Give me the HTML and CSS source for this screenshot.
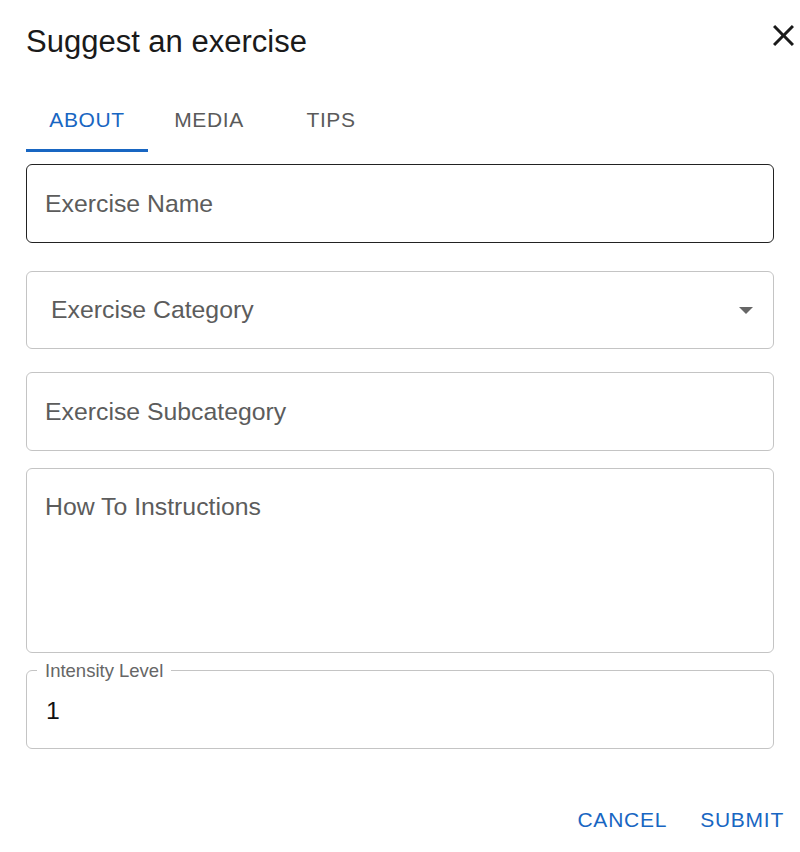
FILE: index.html
```html
<!DOCTYPE html>
<html lang="en">
<head>
<meta charset="utf-8">
<title>Suggest an exercise</title>
<link rel="stylesheet" href="styles.css">
</head>
<body>
<div class="dialog">
  <div class="header">
    <h1 class="title">Suggest an exercise</h1>
    <button class="close" aria-label="Close">
      <svg viewBox="5 5 14 14" width="21" height="21"><path d="M19 6.41 17.59 5 12 10.59 6.41 5 5 6.41 10.59 12 5 17.59 6.41 19 12 13.41 17.59 19 19 17.59 13.41 12z" fill="#1a1a1a"/></svg>
    </button>
  </div>
  <div class="tabs">
    <div class="tab active">ABOUT</div>
    <div class="tab">MEDIA</div>
    <div class="tab">TIPS</div>
  </div>
  <div class="form">
    <div class="field field-focus f-name"><span class="ph">Exercise Name</span></div>
    <div class="field field-select f-cat"><span class="ph">Exercise Category</span>
      <svg class="arrow" viewBox="0 0 14 7" width="14" height="7"><path d="M0 0 L7 7 L14 0z" fill="#666"/></svg>
    </div>
    <div class="field f-sub"><span class="ph">Exercise Subcategory</span></div>
    <div class="field field-multi f-how"><span class="ph">How To Instructions</span></div>
    <div class="field field-outlined f-int">
      <span class="legend">Intensity Level</span>
      <span class="value">1</span>
    </div>
  </div>
  <div class="actions">
    <button class="btn">CANCEL</button>
    <button class="btn">SUBMIT</button>
  </div>
</div>
</body>
</html>
```
FILE: styles.css
```css
* { box-sizing: border-box; }
html, body { margin: 0; padding: 0; background: #fff; }
body { font-family: "Liberation Sans", Arial, sans-serif; }

.dialog { width: 800px; height: 852px; padding: 24px 26px 0 26px; }

.header { display: flex; justify-content: space-between; align-items: flex-start; height: 36px; }
.title { margin: 0; font-size: 31px; font-weight: 400; line-height: 36px; color: #1a1a1a; }
.close { border: 0; background: none; padding: 0; margin: 1px -20px 0 0; width: 21px; height: 21px; display: block; }
.close svg { display: block; }

.tabs { display: flex; margin-top: 26px; height: 66px; }
.tab { width: 122px; display: flex; align-items: center; justify-content: center;
  font-size: 21px; letter-spacing: 0.6px; color: #5a5a5a; border-bottom: 3px solid transparent; padding-top: 4px; }
.tab.active { color: #1866c2; border-bottom-color: #1866c2; }

.form { display: flex; flex-direction: column; margin-top: 12px; }
.field { height: 79px; border: 1px solid #c4c4c4; border-radius: 6px; display: flex; align-items: center;
  padding-left: 18px; font-size: 24.8px; color: #5c5c5c; position: relative; }
.field-focus { border: 1.5px solid #222; }
.f-cat { height: 78px; margin-top: 28px; padding-left: 24px; padding-right: 20px; justify-content: space-between; }
.f-sub { margin-top: 23px; }
.f-how { margin-top: 17px; height: 185px; align-items: flex-start; padding-top: 24px; line-height: 28px; }
.f-int { margin-top: 17px; padding-top: 3px; }
.legend { position: absolute; top: -11px; left: 10px; padding: 0 8px 0 8px; background: #fff;
  font-size: 18.5px; line-height: 22px; color: #666; }
.value { color: #111; padding-left: 1px; }
.arrow { display: block; }

.actions { display: flex; justify-content: flex-end; gap: 33px; margin-top: 51px; margin-right: -10px; height: 40px; align-items: center; }
.btn { border: 0; background: none; padding: 0; font-family: "Liberation Sans", Arial, sans-serif;
  font-size: 21px; letter-spacing: 0.75px; color: #1866c2; }
```
